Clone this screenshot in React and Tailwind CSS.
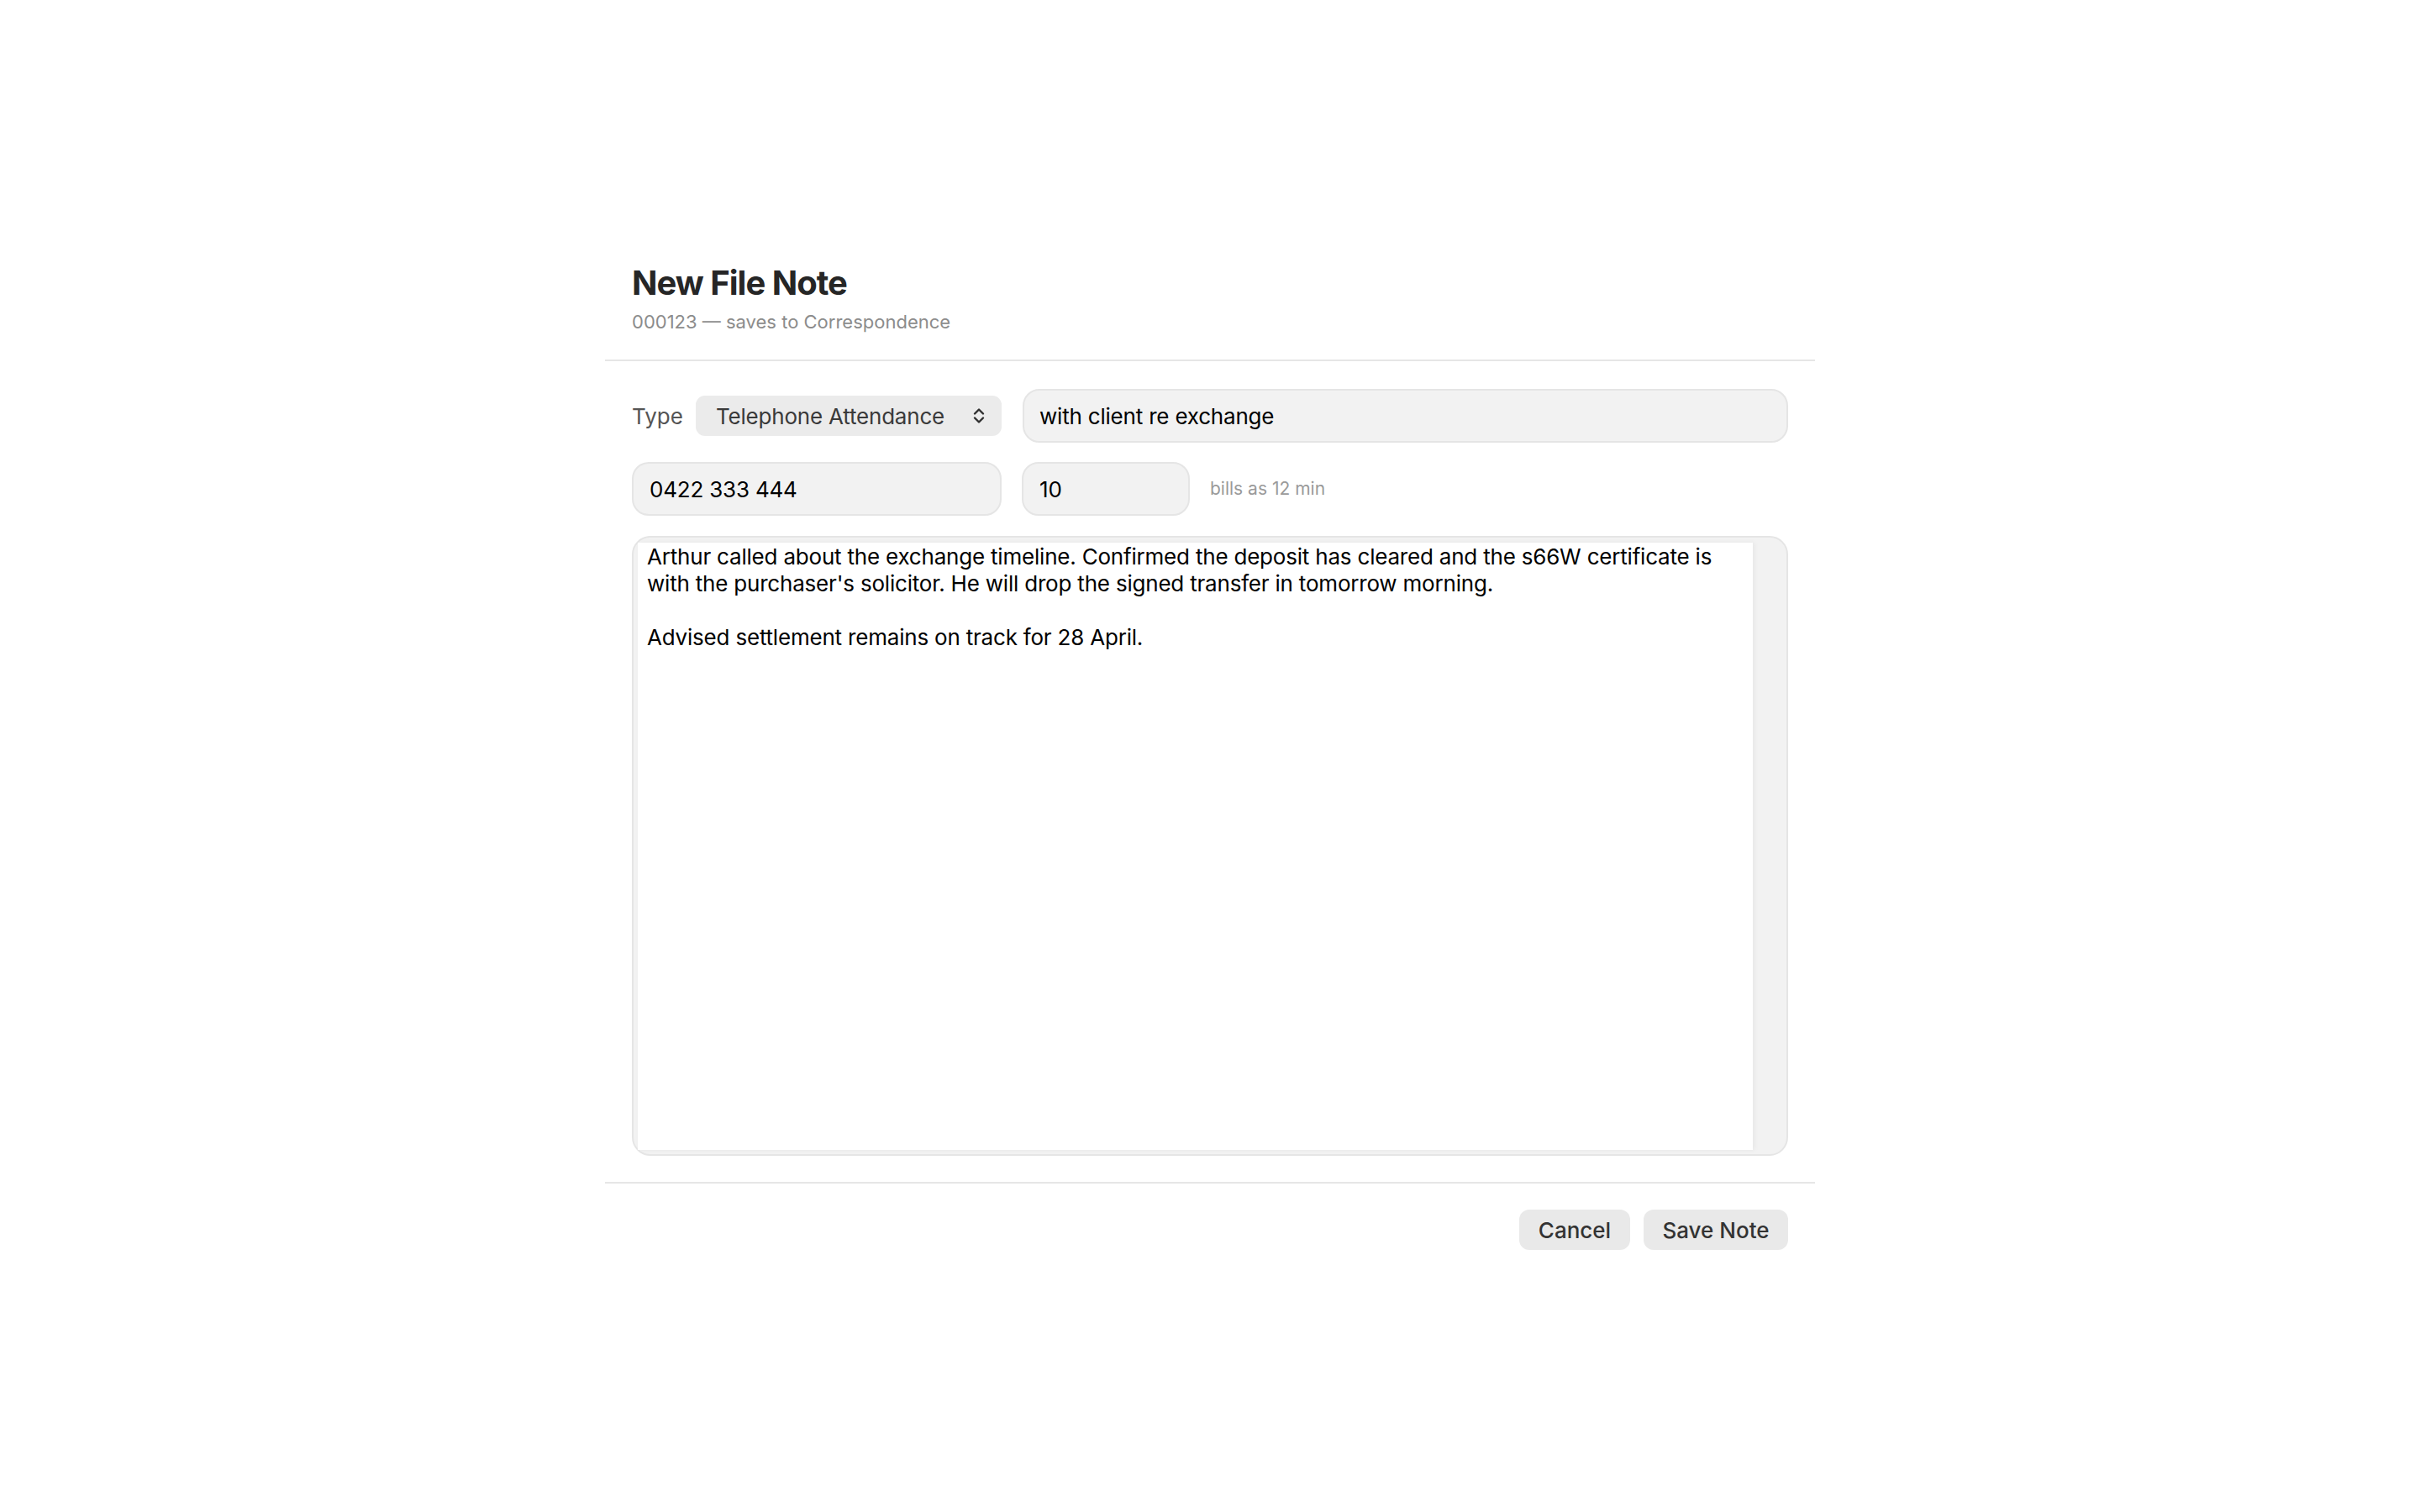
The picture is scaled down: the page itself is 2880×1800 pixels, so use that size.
import React from "react";

function Chevrons() {
  return (
    <svg width="16" height="20" viewBox="0 0 16 20" fill="none" className="shrink-0">
      <path d="M3 7.5 L8 2.5 L13 7.5" stroke="#2f2f2f" strokeWidth="2.4" strokeLinecap="round" strokeLinejoin="round" />
      <path d="M3 12.5 L8 17.5 L13 12.5" stroke="#2f2f2f" strokeWidth="2.4" strokeLinecap="round" strokeLinejoin="round" />
    </svg>
  );
}

export default function App() {
  const note =
    "Arthur called about the exchange timeline. Confirmed the deposit has cleared and the s66W certificate is with the purchaser's solicitor. He will drop the signed transfer in tomorrow morning.\n\nAdvised settlement remains on track for 28 April.";
  return (
    <div className="min-h-screen w-full bg-white flex justify-center [font-family:Inter,'Noto_Sans',sans-serif]">
      <div className="w-[1440px] mt-[281px] flex flex-col">
        {/* Header */}
        <div className="px-[32px] pt-[32px] pb-[31px]">
          <h1 className="text-[40px] leading-[48px] font-bold text-[#262626] tracking-[-1px]">New File Note</h1>
          <p className="mt-[8px] text-[22px] leading-[28px] text-[#8c8c8c]">000123 — saves to Correspondence</p>
        </div>
        <div className="h-[2px] bg-[#e6e6e6]" />

        {/* Body */}
        <div className="px-[32px] pt-[33px] pb-[31px] flex flex-col">
          <div className="flex items-center h-[64px] gap-[25px]">
            <div className="w-[440px] flex items-center gap-[24px]">
              <span className="w-[52px] text-[26px] text-[#555555]">Type</span>
              <div className="flex-1 h-[48px] rounded-[11px] bg-[#ebebeb] pl-[24px] pr-[19px] flex items-center justify-between">
                <span className="text-[26px] text-[#3a3a3a] tracking-[-0.2px]">Telephone Attendance</span>
                <Chevrons />
              </div>
            </div>
            <div className="flex-1 h-[64px] rounded-[20px] border-2 border-[#e5e5e5] bg-[#f2f2f2] px-[18px] flex items-center">
              <span className="text-[26px] text-black tracking-[-0.2px]">with client re exchange</span>
            </div>
          </div>

          <div className="mt-[23px] flex items-center h-[64px] gap-[24px]">
            <div className="w-[440px] h-[64px] rounded-[20px] border-2 border-[#e5e5e5] bg-[#f2f2f2] px-[19px] flex items-center">
              <span className="text-[26px] text-black tracking-[-0.2px]">0422 333 444</span>
            </div>
            <div className="w-[200px] h-[64px] rounded-[20px] border-2 border-[#e5e5e5] bg-[#f2f2f2] px-[19px] flex items-center">
              <span className="text-[26px] text-black">10</span>
            </div>
            <span className="text-[21px] text-[#9a9a9a]">bills as 12 min</span>
          </div>

          <div className="mt-[24px] h-[738px] rounded-[22px] border-2 border-[#e5e5e5] bg-[#f2f2f2] pl-[5px] pt-[6px] pr-[40px] pb-[5px] flex">
            <div className="flex-1 bg-white shadow-[2px_0_6px_rgba(0,0,0,0.05)] pl-[11px] pt-[1px] pr-[12px] whitespace-pre-wrap text-[26px] leading-[32px] text-black tracking-[-0.2px]">
              {note}
            </div>
          </div>
        </div>
        <div className="h-[2px] bg-[#e6e6e6]" />

        {/* Footer */}
        <div className="px-[32px] pt-[31px] pb-[32px] flex justify-end gap-[16px]">
          <button className="w-[132px] h-[48px] rounded-[12px] bg-[#e9e9e9] text-[26px] font-medium text-[#333333] flex items-center justify-center">
            Cancel
          </button>
          <button className="w-[172px] h-[48px] rounded-[12px] bg-[#e9e9e9] text-[26px] font-medium text-[#333333] flex items-center justify-center">
            Save Note
          </button>
        </div>
      </div>
    </div>
  );
}
